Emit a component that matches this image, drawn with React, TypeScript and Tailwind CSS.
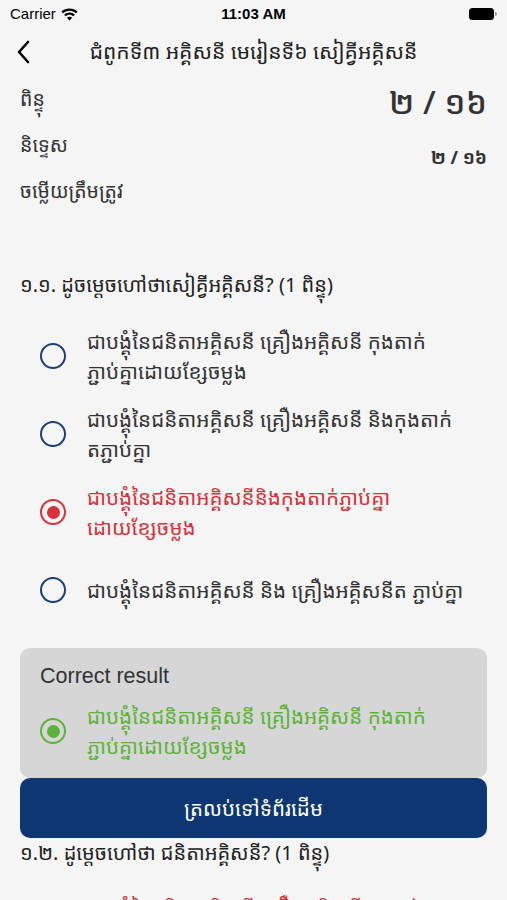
const khmer = { fontFamily: '"Noto Sans Khmer", "Khmer OS", "Noto Sans", "Liberation Sans", sans-serif' }
const latin = { fontFamily: '"Liberation Sans", Arial, sans-serif' }

type RadioState = 'idle' | 'wrong' | 'correct'

interface OptionProps {
  lines: string[]
  state?: RadioState
}

function Radio({ state = 'idle' }: { state?: RadioState }) {
  const ring =
    state === 'wrong' ? 'border-[#d9303a]' : state === 'correct' ? 'border-[#5cb338]' : 'border-[#1c3f7c]'
  const dot = state === 'wrong' ? 'bg-[#d9303a]' : 'bg-[#5cb338]'
  return (
    <div className={`w-[26px] h-[26px] shrink-0 rounded-full border-[2.5px] ${ring} flex items-center justify-center`}>
      {state !== 'idle' && <div className={`w-[13px] h-[13px] rounded-full ${dot}`} />}
    </div>
  )
}

// Khmer has no spaces to break on reliably, so lines are split as in the app
function OptionText({ lines, state = 'idle' }: OptionProps) {
  const color =
    state === 'wrong' ? 'text-[#d9303a]' : state === 'correct' ? 'text-[#5cb338]' : 'text-[#333333]'
  return (
    <p className={`text-[20.6px] leading-[30px] whitespace-nowrap ${color}`} style={khmer}>
      {lines.map((l, i) => (
        <span key={i} className="block">{l}</span>
      ))}
    </p>
  )
}

function Option({ lines, state = 'idle' }: OptionProps) {
  return (
    <div className="flex items-center gap-[21px] pl-[40px] pr-[20px] min-h-[78px]">
      <Radio state={state} />
      <OptionText lines={lines} state={state} />
    </div>
  )
}

export default function App() {
  return (
    <div className="w-[507px] h-[900px] overflow-hidden bg-[#f5f5f5] text-[#222]" style={khmer}>
      {/* Status bar */}
      <div className="h-[28px] flex items-center justify-between px-[10px] text-[15px] text-black" style={latin}>
        <div className="flex items-center gap-[5px] w-[120px]">
          <span>Carrier</span>
          <svg className="w-[17px] h-[13px]" viewBox="0 0 17 13" fill="currentColor">
            <path d="M8.5 0.5C5.3 0.5 2.5 1.7 0.4 3.7L2 5.3C3.7 3.7 6 2.7 8.5 2.7S13.3 3.7 15 5.3L16.6 3.7C14.5 1.7 11.7 0.5 8.5 0.5Z" />
            <path d="M8.5 4.6C6.4 4.6 4.5 5.4 3.1 6.7L4.7 8.3C5.7 7.4 7 6.8 8.5 6.8S11.3 7.4 12.3 8.3L13.9 6.7C12.5 5.4 10.6 4.6 8.5 4.6Z" />
            <path d="M8.5 8.7C7.5 8.7 6.6 9.1 5.9 9.7L8.5 12.4L11.1 9.7C10.4 9.1 9.5 8.7 8.5 8.7Z" />
          </svg>
        </div>
        <span className="font-bold">11:03 AM</span>
        <div className="w-[120px] flex justify-end">
          <div className="flex items-center">
            <div className="w-[25px] h-[12px] rounded-[3.5px] bg-black" />
            <div className="w-[2px] h-[4px] rounded-r-sm bg-black/40 ml-[1px]" />
          </div>
        </div>
      </div>

      {/* Nav bar */}
      <div className="relative h-[48px] flex items-center justify-center">
        <button className="absolute left-[14px] top-1/2 -translate-y-1/2 text-black">
          <svg className="w-[22px] h-[26px]" viewBox="0 0 22 26" fill="none" stroke="currentColor" strokeWidth={2.6} strokeLinecap="round" strokeLinejoin="round">
            <path d="M14 3 L5 13 L14 23" />
          </svg>
        </button>
        <h1 className="text-[21px] text-[#222]">ជំពូកទី៣ អគ្គិសនី មេរៀនទី៦ សៀគ្វីអគ្គិសនី</h1>
      </div>

      {/* Score summary */}
      <div className="flex justify-between px-[20px] pt-[6px]">
        <div className="flex flex-col gap-[12px] text-[19.5px] text-[#333]">
          <span className="leading-[34px]">ពិន្ទុ</span>
          <span className="leading-[34px]">និទ្ទេស</span>
          <span className="leading-[34px]">ចម្លើយត្រឹមត្រូវ</span>
        </div>
        <div className="flex flex-col items-end">
          <span className="text-[33px] leading-[40px] font-medium text-[#333]">២ / ១៦</span>
          <span className="mt-[22px] text-[18px] font-bold text-[#333]">២ / ១៦</span>
        </div>
      </div>

      {/* Question 1.1 */}
      <p className="px-[20px] mt-[64px] text-[20px] leading-[26px] text-[#222]">១.១. ដូចម្ដេចហៅថាសៀគ្វីអគ្គិសនី? (1 ពិន្ទុ)</p>

      <div className="mt-[19px]">
        <Option lines={['ជាបង្គុំនៃជនិតាអគ្គិសនី  គ្រឿងអគ្គិសនី កុងតាក់', 'ភ្ជាប់គ្នាដោយខ្សែចម្លង']} />
        <Option lines={['ជាបង្គុំនៃជនិតាអគ្គិសនី  គ្រឿងអគ្គិសនី និងកុងតាក់', 'តភ្ជាប់គ្នា']} />
        <Option lines={['ជាបង្គុំនៃជនិតាអគ្គិសនីនិងកុងតាក់ភ្ជាប់គ្នា', 'ដោយខ្សែចម្លង']} state="wrong" />
        <Option lines={['ជាបង្គុំនៃជនិតាអគ្គិសនី និង គ្រឿងអគ្គិសនីត ភ្ជាប់គ្នា']} />
      </div>

      {/* Correct result */}
      <div className="mx-[20px] mt-[19px] rounded-[10px] bg-[#d6d6d6] pt-[14px] pb-[17px]">
        <p className="px-[20px] text-[21.5px] leading-[28px] text-[#333]" style={latin}>
          Correct result
        </p>
        <div className="flex items-center gap-[21px] px-[20px] mt-[11px]">
          <Radio state="correct" />
          <OptionText lines={['ជាបង្គុំនៃជនិតាអគ្គិសនី  គ្រឿងអគ្គិសនី កុងតាក់', 'ភ្ជាប់គ្នាដោយខ្សែចម្លង']} state="correct" />
        </div>
      </div>

      <button className="mx-[20px] w-[467px] h-[60px] rounded-[10px] bg-[#0e3673] text-white text-[20.5px] flex items-center justify-center" style={khmer}>
        ត្រលប់ទៅទំព័រដើម
      </button>

      <p className="px-[20px] mt-[1px] text-[20px] leading-[28px] text-[#222]">១.២. ដូម្ដេចហៅថា ជនិតាអគ្គិសនី? (1 ពិន្ទុ)</p>
      <p className="pl-[87px] mt-[25px] text-[20.6px] leading-[30px] text-[#d9303a] whitespace-nowrap">ជាបង្គុំនៃជនិតាអគ្គិសនី គ្រឿងអគ្គិសនីកុងតាក់</p>
    </div>
  )
}
